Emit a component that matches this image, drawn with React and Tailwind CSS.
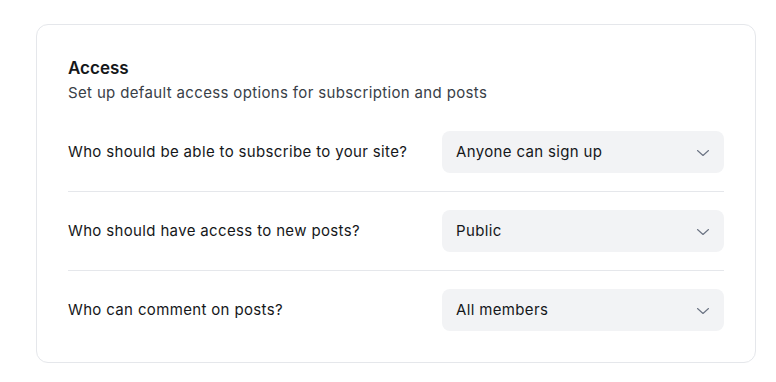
import React from "react";

const rows = [
  { label: "Who should be able to subscribe to your site?", value: "Anyone can sign up" },
  { label: "Who should have access to new posts?", value: "Public" },
  { label: "Who can comment on posts?", value: "All members" },
];

function Chevron() {
  return (
    <svg width="14" height="14" viewBox="0 0 14 14" fill="none" className="text-gray-500">
      <path d="M1.5 4.5L7 9.5L12.5 4.5" stroke="currentColor" strokeWidth="1.1" strokeLinecap="round" strokeLinejoin="round" />
    </svg>
  );
}

function SelectRow({ label, value, last }) {
  return (
    <div className={`flex items-center justify-between py-[18px] ${last ? "" : "border-b border-gray-200"}`}>
      <p className="pt-[1px] text-[15px] tracking-[0.35px] text-[#15171a]">{label}</p>
      <button
        type="button"
        className="w-[282px] h-[42px] flex items-center justify-between rounded-lg bg-[#f2f3f5] pl-[14px] pr-[14px] pt-[1px] text-[15px] tracking-[0.35px] text-[#15171a]"
      >
        <span>{value}</span>
        <Chevron />
      </button>
    </div>
  );
}

export default function App() {
  return (
    <div className="min-h-screen bg-white pt-[24px] pl-[36px]" style={{ fontFamily: "Inter, 'Noto Sans', sans-serif" }}>
      <div className="w-[720px] rounded-xl border border-gray-200 px-[31px] pt-[31px] pb-[13px]">
        <h2 className="text-[17px] leading-[24px] font-semibold text-[#15171a]">Access</h2>
        <p className="mt-[1px] text-[15px] leading-[24px] tracking-[0.35px] text-[#394047]">
          Set up default access options for subscription and posts
        </p>
        <div className="mt-[8px]">
          {rows.map((r, i) => (
            <SelectRow key={r.label} {...r} last={i === rows.length - 1} />
          ))}
        </div>
      </div>
    </div>
  );
}
